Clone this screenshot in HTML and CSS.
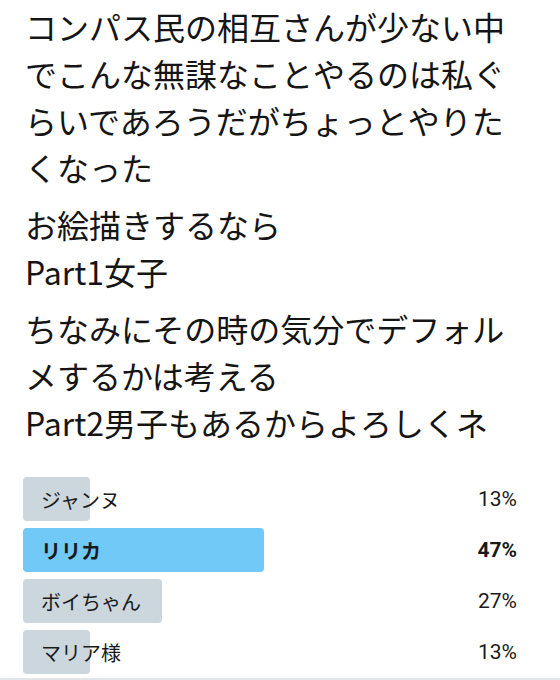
FILE: index.html
```html
<!DOCTYPE html>
<html lang="ja">
<head>
<meta charset="utf-8">
<link rel="stylesheet" href="styles.css">
</head>
<body>
<div class="page">
  <div class="tweet">
    <p>コンパス民の相互さんが少ない中でこんな無謀なことやるのは私ぐらいであろうだがちょっとやりたくなった</p>
    <p>お絵描きするなら<br>Part1女子</p>
    <p>ちなみにその時の気分でデフォルメするかは考える<br>Part2男子もあるからよろしくネ</p>
  </div>
  <div class="poll">
    <div class="row">
      <div class="bar" style="width:67px"></div>
      <span class="label">ジャンヌ</span>
      <span class="pct">13%</span>
    </div>
    <div class="row winner">
      <div class="bar" style="width:241px"></div>
      <span class="label">リリカ</span>
      <span class="pct">47%</span>
    </div>
    <div class="row">
      <div class="bar" style="width:139px"></div>
      <span class="label">ボイちゃん</span>
      <span class="pct">27%</span>
    </div>
    <div class="row">
      <div class="bar" style="width:67px"></div>
      <span class="label">マリア様</span>
      <span class="pct">13%</span>
    </div>
  </div>
  <div class="rule"></div>
</div>
</body>
</html>
```
FILE: styles.css
```css
html, body {
  margin: 0;
  padding: 0;
  background: #ffffff;
}

.page {
  width: 560px;
  height: 680px;
  overflow: hidden;
  position: relative;
  font-family: "Noto Sans CJK JP", "Noto Sans", sans-serif;
  color: #151515;
}

.tweet {
  padding: 3px 0 0 25px;
  width: 494px;
}

.tweet p {
  margin: 0;
  font-size: 32px;
  line-height: 47px;
}

.tweet p + p {
  margin-top: 10px;
}

.poll {
  margin: 31px 0 0 23px;
  width: 494px;
  display: flex;
  flex-direction: column;
  gap: 7px;
}

.row {
  position: relative;
  height: 44px;
  display: flex;
  align-items: center;
  justify-content: space-between;
}

.bar {
  position: absolute;
  left: 0;
  top: 0;
  height: 44px;
  border-radius: 4px;
  background: #ccd6dd;
}

.winner .bar {
  background: #71c9f8;
}

.label {
  position: relative;
  padding-left: 18px;
  font-size: 20px;
  color: #1a1a1a;
}

.pct {
  position: relative;
  font-family: Roboto, "Liberation Sans", sans-serif;
  font-size: 21px;
  color: #1a1a1a;
}

.winner .label,
.winner .pct {
  font-weight: 700;
}

.rule {
  position: absolute;
  left: 0;
  right: 0;
  bottom: 0;
  height: 2px;
  background: #e3e6e8;
}
```
